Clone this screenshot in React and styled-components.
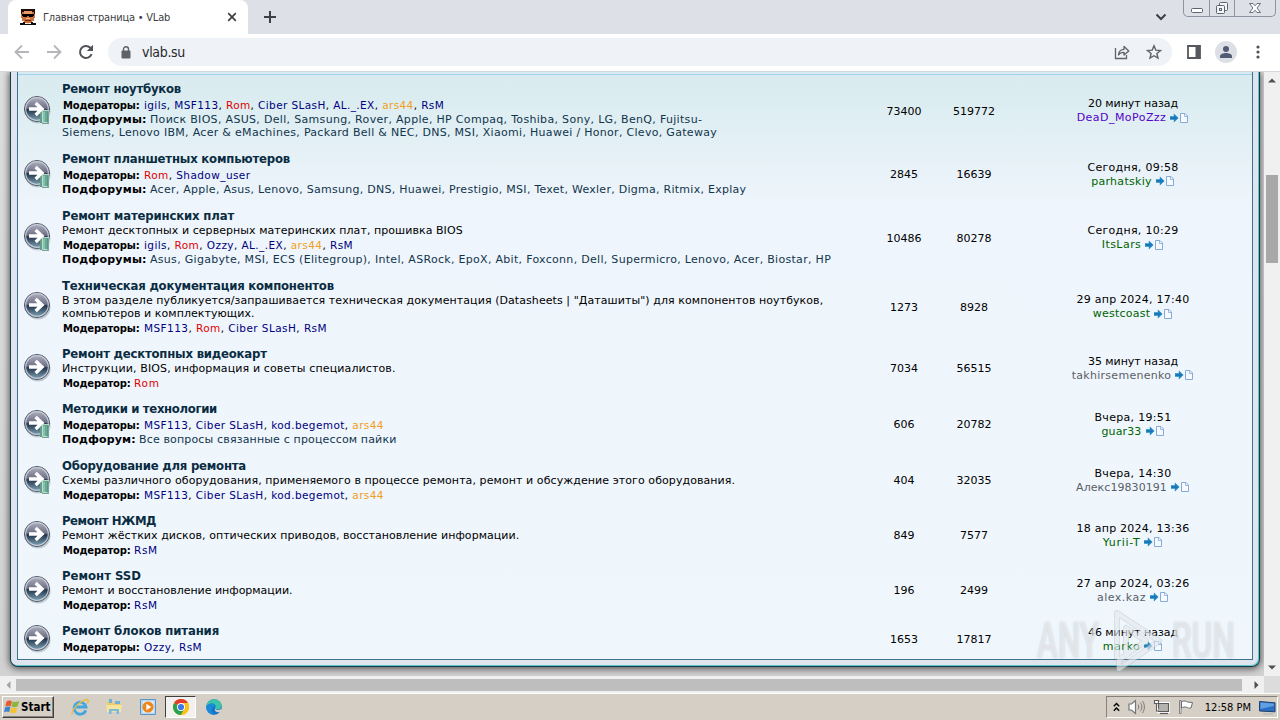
import React from 'react';
import styled, { createGlobalStyle } from 'styled-components';

const NAVY = '#000080';
const RED = '#e00000';
const ORANGE = '#f0a020';
const GREEN = '#006400';
const GREY = '#5a5f66';
const VIOLET = '#5500cc';

const igils = ['igils', NAVY];
const msf = ['MSF113', NAVY];
const rom = ['Rom', RED];
const ciber = ['Ciber SLasH', NAVY];
const alex = ['AL._.EX', NAVY];
const ars = ['ars44', ORANGE];
const rsm = ['RsM', NAVY];
const ozzy = ['Ozzy', NAVY];
const kod = ['kod.begemot', NAVY];
const shadow = ['Shadow_user', NAVY];

// "track" values are letter-spacing in px, tuned for each line
const forums = [
    {
        height: 70, title: 'Ремонт ноутбуков', track: -0.23,
        mods: [igils, msf, rom, ciber, alex, ars, rsm], modTrack: 0.39,
        subs: [
            { text: 'Поиск BIOS, ASUS, Dell, Samsung, Rover, Apple, HP Compaq, Toshiba, Sony, LG, BenQ, Fujitsu-', track: 0.315 },
            { text: 'Siemens, Lenovo IBM, Acer & eMachines, Packard Bell & NEC, DNS, MSI, Xiaomi, Huawei / Honor, Clevo, Gateway', track: 0.3 },
        ],
        topics: '73400', posts: '519772',
        date: '20 минут назад', dateTrack: -0.05, user: 'DeaD_MoPoZzz', userColor: VIOLET, userTrack: 0.45,
    },
    {
        height: 57, title: 'Ремонт планшетных компьютеров', track: -0.206,
        mods: [rom, shadow], modTrack: 0.42,
        subs: [{ text: 'Acer, Apple, Asus, Lenovo, Samsung, DNS, Huawei, Prestigio, MSI, Texet, Wexler, Digma, Ritmix, Explay', track: 0.265 }],
        topics: '2845', posts: '16639',
        date: 'Сегодня, 09:58', dateTrack: 0.28, user: 'parhatskiy', userColor: GREEN, userTrack: 0.3,
    },
    {
        height: 70, title: 'Ремонт материнских плат', track: -0.167,
        desc: [{ text: 'Ремонт десктопных и серверных материнских плат, прошивка BIOS', track: 0.06 }],
        mods: [igils, rom, ozzy, alex, ars, rsm], modTrack: 0.42,
        subs: [{ text: 'Asus, Gigabyte, MSI, ECS (Elitegroup), Intel, ASRock, EpoX, Abit, Foxconn, Dell, Supermicro, Lenovo, Acer, Biostar, HP', track: 0.298 }],
        topics: '10486', posts: '80278',
        date: 'Сегодня, 10:29', dateTrack: 0.28, user: 'ItsLars', userColor: GREEN, userTrack: 0.45,
    },
    {
        height: 68, title: 'Техническая документация компонентов', track: -0.22,
        desc: [
            { text: 'В этом разделе публикуется/запрашивается техническая документация (Datasheets | "Даташиты") для компонентов ноутбуков,', track: 0.072 },
            { text: 'компьютеров и комплектующих.', track: 0.05 },
        ],
        mods: [msf, rom, ciber, rsm], modTrack: 0.43,
        topics: '1273', posts: '8928',
        date: '29 апр 2024, 17:40', dateTrack: 0.24, user: 'westcoast', userColor: GREEN, userTrack: 0.25,
    },
    {
        height: 55, title: 'Ремонт десктопных видеокарт', track: -0.21,
        desc: [{ text: 'Инструкции, BIOS, информация и советы специалистов.', track: 0.12 }],
        mods: [rom], modTrack: 0.8,
        topics: '7034', posts: '56515',
        date: '35 минут назад', dateTrack: -0.05, user: 'takhirsemenenko', userColor: GREY, userTrack: 0.29,
    },
    {
        height: 57, title: 'Методики и технологии', track: -0.333,
        mods: [msf, ciber, kod, ars], modTrack: 0.41,
        subs: [{ text: 'Все вопросы связанные с процессом пайки', track: 0.155 }],
        topics: '606', posts: '20782',
        date: 'Вчера, 19:51', dateTrack: 0.314, user: 'guar33', userColor: GREEN, userTrack: 0.13,
    },
    {
        height: 55, title: 'Оборудование для ремонта', track: -0.227, folder: true,
        desc: [{ text: 'Схемы различного оборудования, применяемого в процессе ремонта, ремонт и обсуждение этого оборудования.', track: 0.08 }],
        mods: [msf, ciber, kod, ars], modTrack: 0.41,
        topics: '404', posts: '32035',
        date: 'Вчера, 14:30', dateTrack: 0.314, user: 'Алекс19830191', userColor: GREY, userTrack: 0.06,
    },
    {
        height: 55, title: 'Ремонт НЖМД', track: -0.473,
        desc: [{ text: 'Ремонт жёстких дисков, оптических приводов, восстановление информации.', track: 0.045 }],
        mods: [rsm], modTrack: 0.6,
        topics: '849', posts: '7577',
        date: '18 апр 2024, 13:36', dateTrack: 0.24, user: 'Yurii-T', userColor: GREEN, userTrack: 0.7,
    },
    {
        height: 55, title: 'Ремонт SSD', track: 0,
        desc: [{ text: 'Ремонт и восстановление информации.', track: -0.02 }],
        mods: [rsm], modTrack: 0.6,
        topics: '196', posts: '2499',
        date: '27 апр 2024, 03:26', dateTrack: 0.24, user: 'alex.kaz', userColor: GREY, userTrack: 0.49,
    },
    {
        height: 43, title: 'Ремонт блоков питания', track: -0.142,
        mods: [ozzy, rsm], modTrack: 0.45,
        topics: '1653', posts: '17817',
        date: '46 минут назад', dateTrack: -0.05, user: 'marko', userColor: GREEN, userTrack: 0.6,
    },
];

const ForumIcon = ({ folder }) => (
    <svg width="28" height="30" viewBox="0 0 28 30">
        <defs>
            <linearGradient id="ball" x1="0" y1="0" x2="0" y2="1">
                <stop offset="0" stopColor="#b3b3c2" />
                <stop offset="0.47" stopColor="#6d7086" />
                <stop offset="0.53" stopColor="#22334a" />
                <stop offset="1" stopColor="#86abbd" />
            </linearGradient>
        </defs>
        <ellipse cx="14" cy="16.5" rx="12.5" ry="12" fill="#8899a5" opacity="0.45" />
        <circle cx="13" cy="14" r="12.5" fill="url(#ball)" stroke="#525866" />
        <circle cx="13" cy="14" r="11.3" fill="none" stroke="#cdd3dd" strokeWidth="1.2" opacity="0.85" />
        <path d="M5 12.2h8.5L10.500 9.200l2.300-2.400L20.500 14l-7.700 7.200-2.300-2.400 3-3H5z" fill="#fff" />
        {folder && (
            <g>
                <path d="M16 18l3-2v12h-3z" fill="#5e9f86" />
                <path d="M18.5 15.5h6.5v12h-6.5z" fill="#69a892" stroke="#d0ece2" strokeWidth="0.8" />
                <path d="M24 16v12M18 28.4h7" stroke="#477b70" strokeWidth="0.8" />
                <path d="M20 17v10" stroke="#a9dacb" />
            </g>
        )}
    </svg>
);

const GotoPost = () => (
    <svg width="20" height="13" viewBox="0 0 20 13">
        <path d="M1 4.200h3.800V1.500L9.500 6 4.800 10.500V7.800H1z" fill="#1f86c4" />
        <path d="M2 6h5.500" stroke="#1766a5" />
        <path d="M11.500 1.500h4.500l2.500 2.500v6.500h-7z" fill="#f6faff" stroke="#86aadb" />
        <path d="M15.500 1.500v3h3" fill="none" stroke="#86aadb" strokeWidth="0.8" />
    </svg>
);

const ForumRow = ({ forum }) => (
    <Row $height={forum.height}>
        <IconCell><ForumIcon folder={forum.subs || forum.folder} /></IconCell>
        <InfoCell>
            <Title $track={forum.track}>{forum.title}</Title>
            {forum.desc && forum.desc.map((d) => <Desc key={d.text} $track={d.track}>{d.text}</Desc>)}
            <Mods $track={forum.modTrack}>
                <ModLabel $single={forum.mods.length === 1}>{forum.mods.length === 1 ? 'Модератор:' : 'Модераторы:'}</ModLabel>
                {forum.mods.map(([name, color], i) => (
                    <React.Fragment key={name}>
                        {i > 0 && ', '}
                        <User $color={color}>{name}</User>
                    </React.Fragment>
                ))}
            </Mods>
            {forum.subs && forum.subs.map((s, i) => (
                <Sub key={s.text} $track={s.track}>
                    {i === 0 && (forum.title === 'Методики и технологии'
                        ? <SubLabel $width={77} $track={0.13}>Подфорум:</SubLabel>
                        : <SubLabel $width={88} $track={0.22}>Подфорумы:</SubLabel>)}
                    {s.text}
                </Sub>
            ))}
        </InfoCell>
        <CountCell>{forum.topics}</CountCell>
        <CountCell>{forum.posts}</CountCell>
        <LastCell>
            <DateLine $track={forum.dateTrack}>{forum.date}</DateLine>
            <UserLine $track={forum.userTrack}>
                <User $color={forum.userColor}>{forum.user}</User>
                <GotoPost />
            </UserLine>
        </LastCell>
    </Row>
);

const Favicon = () => (
    <svg width="16" height="16" viewBox="0 0 16 16" shapeRendering="crispEdges">
        <path d="M1 1h14v8h-1v3h-2v2H4v-2H2V9H1z" fill="#c8703c" />
        <path d="M1 0h14v5h-1V3h-2V2H4v1H2v2H1z" fill="#1d0d0a" />
        <path d="M4 2h8v3H4z" fill="#e79a62" />
        <path d="M2 5h12v2h-1v1H9V7H7v1H3V7H2z" fill="#000" />
        <path d="M6 9h4v1H6z" fill="#f3b684" />
        <path d="M5 11h6v1H5z" fill="#7d1f12" />
        <path d="M0 14h3v-1h2v2h6v-2h2v1h3v2H0z" fill="#100a0a" />
        <path d="M7 14h2v1H7z" fill="#e8d9d0" />
    </svg>
);

const TabBar = () => (
    <TabStrip>
        <Tab>
            <Favicon />
            <TabTitle>Главная страница • VLab</TabTitle>
            <svg width="10" height="10" viewBox="0 0 10 10"><path d="M1.2 1.2l7.6 7.6M8.8 1.2L1.2 8.8" stroke="#3c4043" strokeWidth="1.7" /></svg>
        </Tab>
        <NewTab>
            <svg width="12" height="12" viewBox="0 0 12 12"><path d="M6 0v12M0 6h12" stroke="#3c4043" strokeWidth="2" /></svg>
        </NewTab>
        <TabSearch>
            <svg width="12" height="8" viewBox="0 0 12 8"><path d="M1.5 1.5L6 6l4.500-4.500" fill="none" stroke="#3c4043" strokeWidth="2" /></svg>
        </TabSearch>
        <WindowButtons>
            <WindowButton $width={25}>
                <svg width="14" height="14" viewBox="0 0 14 14"><rect x="1.500" y="7.500" width="11" height="4" rx="1" fill="#fff" stroke="#5d6370" /></svg>
            </WindowButton>
            <WindowButton $width={25}>
                <svg width="14" height="14" viewBox="0 0 14 14" fill="#f4f5f8" stroke="#5d6370">
                    <rect x="4.500" y="1.500" width="8" height="8" rx="1" />
                    <rect x="1.500" y="4.500" width="8" height="8" rx="1" />
                    <rect x="4.500" y="7.500" width="2" height="2" />
                </svg>
            </WindowButton>
            <WindowButton $width={41}>
                <svg width="14" height="14" viewBox="0 0 14 14">
                    <path d="M1.500 2.500h3.500l2 2.300 2-2.300h3.500L9 7l3.500 4.500H9L7 9.200 5 11.500H1.500L5 7z" fill="#fff" stroke="#5d6370" strokeWidth="0.9" />
                </svg>
            </WindowButton>
        </WindowButtons>
    </TabStrip>
);

const Toolbar = () => (
    <ToolbarRow>
        <NavButtons>
            <svg width="16" height="16" viewBox="0 0 16 16" fill="none" stroke="#b4b6ba" strokeWidth="1.800"><path d="M15 8H2M8 1.500L1.500 8 8 14.500" /></svg>
            <svg width="16" height="16" viewBox="0 0 16 16" fill="none" stroke="#b4b6ba" strokeWidth="1.800"><path d="M1 8h13M8 1.500L14.500 8 8 14.500" /></svg>
            <svg width="16" height="16" viewBox="0 0 16 16">
                <path d="M13.600 10.200A6 6 0 1 1 12.300 3.800L14 5.500" fill="none" stroke="#505357" strokeWidth="2" />
                <path d="M15 0.800v6.200H8.800z" fill="#505357" />
            </svg>
        </NavButtons>
        <Omnibox>
            <svg width="10" height="13" viewBox="0 0 10 13">
                <rect x="0.500" y="4.500" width="9" height="8" rx="1" fill="#5f6368" />
                <path d="M2.500 5V3.200a2.500 2.500 0 0 1 5 0V5" fill="none" stroke="#5f6368" strokeWidth="1.400" />
            </svg>
            <Url>vlab.su</Url>
            <svg width="16" height="16" viewBox="0 0 16 16" fill="none" stroke="#5f6368" strokeWidth="1.300">
                <path d="M1.500 4v10.500h11V11" />
                <path d="M4.500 11c.3-3.600 2.300-5.600 5.500-5.700V2.500L14.800 7 10 11V8.300C7.500 8.200 5.800 9 4.500 11z" strokeLinejoin="round" />
            </svg>
            <svg width="16" height="16" viewBox="0 0 16 16">
                <path d="M8 1.800l1.800 4.300 4.700.4-3.600 3 1.100 4.600L8 11.700l-4 2.400 1.100-4.600-3.600-3 4.700-.4z" fill="none" stroke="#5f6368" strokeWidth="1.400" />
            </svg>
        </Omnibox>
        <ToolbarActions>
            <svg width="14" height="14" viewBox="0 0 14 14"><path d="M1 1h12v12H1z" fill="#fff" stroke="#55585d" strokeWidth="1.800" /><path d="M8.500 1H13v12H8.500z" fill="#55585d" /></svg>
            <Avatar>
                <svg width="14" height="14" viewBox="0 0 14 14" fill="#515b73"><circle cx="7" cy="4" r="3" /><path d="M1 13v-1.800C1 9 4.500 8 7 8s6 1 6 3.200V13z" /></svg>
            </Avatar>
            <svg width="4" height="14" viewBox="0 0 4 14" fill="#505357"><circle cx="2" cy="2" r="1.600" /><circle cx="2" cy="7" r="1.600" /><circle cx="2" cy="12" r="1.600" /></svg>
        </ToolbarActions>
    </ToolbarRow>
);

const StartLogo = () => (
    <svg width="16" height="16" viewBox="0 0 16 16">
        <path d="M2.500 2.500C4.500 1 6 1.300 8 2.200L6.700 7.300C5 6.500 3.300 6.400 1.300 7.600z" fill="#e8592b" />
        <path d="M8.700 2.500c2 .9 4 .9 6.500-.5l-1.500 5.200c-2 1.300-4.200 1.100-6.300.3z" fill="#86b83c" />
        <path d="M1.100 8.400c2-1.200 3.700-1.100 5.400-.3L5.200 13c-2-.9-3.500-.8-5.200.3z" fill="#3c83cf" />
        <path d="M7.200 8.400c2 .9 4.200.9 6.300-.2L12 13.300c-2 1.200-4 1.200-6.100.2z" fill="#f7c431" />
    </svg>
);

const IeIcon = () => (
    <svg width="18" height="18" viewBox="0 0 18 18" fill="none">
        <path d="M14.800 12.200A6 6 0 1 1 15 9H5" stroke="#46a6e0" strokeWidth="2.800" />
        <path d="M1.500 16.500C-.5 13 9 2 16.500 1.500c1.500 1 .5 3-.5 4" stroke="#e9bd45" strokeWidth="1.400" />
    </svg>
);

const FolderIcon = () => (
    <svg width="18" height="18" viewBox="0 0 18 18">
        <path d="M2 3h5l1 2h8v9H2z" fill="#eccb6a" />
        <path d="M4 1h3v4H4zM10 3h5v3h-5z" fill="#6fb2d8" />
        <path d="M1 7h16l-1 7H2z" fill="#f6e39c" />
        <path d="M4 16v-5h10v5h-2.500v-3h-5v3z" fill="#7bb9dd" />
    </svg>
);

const PlayerIcon = () => (
    <svg width="18" height="18" viewBox="0 0 18 18">
        <path d="M1.500 1.500h15v15h-15z" fill="#b9d9f2" stroke="#5e93c4" />
        <path d="M4 3.500h10.500v11H4z" fill="#e8f3fb" />
        <circle cx="9" cy="9" r="5.600" fill="#f08519" />
        <path d="M7.300 5.700v6.600L12.300 9z" fill="#fff" />
    </svg>
);

const ChromeIcon = () => (
    <svg width="16" height="16" viewBox="0 0 16 16">
        <circle cx="8" cy="8" r="8" fill="#fbc116" />
        <path d="M8 8L1.070 4A8 8 0 0 1 14.930 4z" fill="#e33b2e" />
        <path d="M8 8L1.070 4A8 8 0 0 0 8 16l3.500-6z" fill="#2da14c" />
        <path d="M8 4h6.930A8 8 0 0 1 8 16l3.500-6z" fill="#fbc116" />
        <circle cx="8" cy="8" r="4" fill="#fff" />
        <circle cx="8" cy="8" r="3.100" fill="#3b78e7" />
    </svg>
);

const EdgeIcon = () => (
    <svg width="16" height="16" viewBox="0 0 16 16">
        <circle cx="8" cy="8" r="7.800" fill="#1673c8" />
        <path d="M.3 7.500C1 3 4.200.2 8.200.2c4.500 0 7.500 3.300 7.500 6.300 0 2.500-2 4-4.300 4-1.600 0-2.400-.6-2.400-1.200 0-.5.6-.7.6-1.800C9.600 5.800 8 4.500 6 4.500 3.400 4.500 1.300 6 .3 7.500z" fill="#3cc3a8" />
        <path d="M.3 7.500C1.500 5.800 3.500 4.500 6 4.500c2 0 3.600 1.300 3.600 3C7.800 6.700 5.500 8.500 5.600 11c.1 2.300 1.700 4.200 3.900 4.700C4.500 16.500-.3 12.500.3 7.500z" fill="#1a8bd8" />
        <path d="M9 9.300c0 .8 1 1.700 2.600 1.700 1.400 0 2.500-.4 3.400-1L16 12l-2 2.500-1-1.500c-3 .8-4.800-1.200-4-3.700z" fill="#d4cfc6" />
    </svg>
);

const Taskbar = () => (
    <TaskbarRow>
        <StartButton><StartLogo />Start</StartButton>
        <QuickLaunch>
            <IeIcon />
            <FolderIcon />
            <PlayerIcon />
        </QuickLaunch>
        <ActiveTask><ChromeIcon /></ActiveTask>
        <EdgeIcon />
        <Tray>
            <svg width="7" height="10" viewBox="0 0 7 10"><path d="M.8 4.200l2.700-2.700 2.700 2.700M.8 8.700l2.700-2.700 2.700 2.700" fill="none" stroke="#000" strokeWidth="1.400" /></svg>
            <svg width="17" height="16" viewBox="0 0 17 16" fill="none" stroke="#77777a" strokeWidth="1.200">
                <path d="M1 5h2.500l4-3.500v13L3.500 11H1z" fill="#fff" />
                <path d="M10 5.500c1 1.500 1 3.500 0 5M12.300 3.700c2 2.500 2 6 0 8.600M14.500 2c2.500 3.500 2.500 8.500 0 12" strokeWidth="1" />
            </svg>
            <svg width="17" height="16" viewBox="0 0 17 16" fill="#fff" stroke="#5c5c5e">
                <path d="M5.500 4.500h10v8h-10z" fill="#c9c7c2" stroke="#fff" strokeWidth="3" />
                <path d="M5.500 4.500h10v8h-10z" fill="#b5b3ae" strokeWidth="1.200" />
                <path d="M7 14.500h8" strokeWidth="1.200" />
                <path d="M1.500 1.500h4v3h-4zM3.500 4.500V12H6" strokeWidth="1.100" />
            </svg>
            <svg width="17" height="16" viewBox="0 0 17 16" fill="#fff" stroke="#6b6b6d">
                <path d="M3.500 2.500c3-1 4.500-.5 6 .5l5 .5-1.500 5.500c-2 .5-3.200-.3-4.500-.8-2-.4-3.500-.2-5 .8z" />
                <path d="M1.500 1.500h1.500v13H1.500z" strokeWidth="0.800" />
            </svg>
            <Clock>12:58 PM</Clock>
            <svg width="17" height="15" viewBox="0 0 17 15">
                <path d="M.5 1.500L16 2.800v9L.5 11z" fill="#2a6fc4" stroke="#27406a" />
                <path d="M1.500 2.600L15 3.700v2L1.500 9z" fill="#5da0e6" />
                <path d="M4 14h10" stroke="#a9b0b8" />
            </svg>
        </Tray>
    </TaskbarRow>
);

export default function App() {
    return (
        <Screen>
            <GlobalStyle />
            <TabBar />
            <Toolbar />
            <Viewport>
                <Page>
                    <Panel>
                        <ForumList>
                            {forums.map((forum) => <ForumRow key={forum.title} forum={forum} />)}
                        </ForumList>
                    </Panel>
                </Page>
                <VScroll>
                    <svg width="8" height="5" viewBox="0 0 8 5"><path d="M0 4.500L4 .5l4 4z" fill="#505050" /></svg>
                    <VThumb />
                    <svg width="8" height="5" viewBox="0 0 8 5"><path d="M0 .5h8l-4 4z" fill="#505050" /></svg>
                </VScroll>
            </Viewport>
            <HScroll>
                <svg width="5" height="8" viewBox="0 0 5 8"><path d="M4.500 0v8l-4-4z" fill="#a3a3a3" /></svg>
                <HThumb />
                <svg width="5" height="8" viewBox="0 0 5 8"><path d="M.5 0v8l4-4z" fill="#505050" /></svg>
                <Corner />
            </HScroll>
            <Taskbar />
            <Watermark>
                <WatermarkWord>ANY</WatermarkWord>
                <svg width="64" height="64" viewBox="0 0 64 64" fill="none" strokeLinejoin="round">
                    <path d="M13 50V4l42 28-40 28v-9l27-19-20-13v29" stroke="#aab2bd" strokeOpacity="0.35" strokeWidth="6" />
                    <path d="M13 50V4l42 28-40 28v-9l27-19-20-13v29" stroke="#fff" strokeOpacity="0.45" strokeWidth="4" />
                </svg>
                <WatermarkWord>RUN</WatermarkWord>
            </Watermark>
        </Screen>
    );
}

const GlobalStyle = createGlobalStyle`
  body {
    margin: 0;
    overflow: hidden;
  }

  svg {
    display: block;
    flex: none;
  }
`;

const Screen = styled.div`
  position: relative;
  width: 1280px;
  height: 720px;
  display: flex;
  flex-direction: column;
  overflow: hidden;
  background: #fff;
  font-family: "DejaVu Sans", Verdana, sans-serif;
  font-size: 11px;
  color: #000;
`;

/* browser chrome */

const TabStrip = styled.div`
  height: 34px;
  flex: none;
  display: flex;
  align-items: center;
  background: #dde0e7;
`;

const Tab = styled.div`
  box-sizing: border-box;
  width: 240px;
  height: 34px;
  margin-left: 8px;
  padding: 0 11px 0 12px;
  display: flex;
  align-items: center;
  background: #fff;
  border-radius: 8px 8px 0 0;
`;

const TabTitle = styled.div`
  flex: 1;
  margin-left: 7px;
  font-family: "DejaVu Sans Condensed", "DejaVu Sans", sans-serif;
  font-size: 11px;
  letter-spacing: -0.21px;
  white-space: nowrap;
  color: #3c4043;
`;

const NewTab = styled.div`
  margin-left: 16px;
`;

const TabSearch = styled.div`
  margin-left: auto;
  margin-right: 16px;
`;

const WindowButtons = styled.div`
  align-self: flex-start;
  box-sizing: border-box;
  height: 17px;
  margin-right: 4px;
  display: flex;
  border: 1px solid #8d93a0;
  border-top: 0;
  border-radius: 0 0 5px 5px;
`;

const WindowButton = styled.div`
  box-sizing: border-box;
  width: ${(p) => p.$width}px;
  display: flex;
  align-items: center;
  justify-content: center;

  & + & {
    border-left: 1px solid #8d93a0;
  }
`;

const ToolbarRow = styled.div`
  box-sizing: border-box;
  height: 38px;
  flex: none;
  display: flex;
  align-items: center;
  padding-bottom: 1px;
  background: #fff;
  border-bottom: 1px solid #d5d8dc;
`;

const NavButtons = styled.div`
  width: 108px;
  padding-left: 14px;
  box-sizing: border-box;
  display: flex;
  gap: 16px;
`;

const Omnibox = styled.div`
  box-sizing: border-box;
  width: 1064px;
  height: 28px;
  padding: 0 10px 0 13px;
  display: flex;
  align-items: center;
  gap: 16px;
  border-radius: 14px;
  background: #eff2f6;
`;

const Url = styled.div`
  flex: 1;
  margin-left: -5px;
  font-family: "DejaVu Sans Condensed", "DejaVu Sans", sans-serif;
  font-size: 14px;
  letter-spacing: -0.32px;
  color: #26282c;
`;

const ToolbarActions = styled.div`
  flex: 1;
  padding-left: 15px;
  display: flex;
  align-items: center;
`;

const Avatar = styled.div`
  width: 22px;
  height: 22px;
  margin: 0 19px 0 14px;
  display: flex;
  align-items: center;
  justify-content: center;
  border-radius: 50%;
  background: #dcdfe5;
`;

/* page area */

const Viewport = styled.div`
  height: 604px;
  flex: none;
  display: flex;
`;

const Page = styled.div`
  box-sizing: border-box;
  width: 1264px;
  padding: 0 4px 9px 10px;
  display: flex;
  overflow: hidden;
  background: linear-gradient(#dedede, #d2d2d2);
`;

const Panel = styled.div`
  box-sizing: border-box;
  flex: 1;
  display: flex;
  padding: 0 6px 6px;
  border: 1px solid #153c49;
  border-top: 0;
  border-radius: 0 0 8px 8px;
  background: #dfe5ee;
  box-shadow: 0 1px 7px 1px rgba(0, 0, 0, 0.6), inset -1px -1px 0 #5cc4cb;
`;

const ForumList = styled.div`
  box-sizing: border-box;
  flex: 1;
  padding-top: 3px;
  border: 1px solid #3f728c;
  border-top: 0;
  background:
    linear-gradient(#9fd2ec, #9fd2ec) 0 2px / 100% 1px no-repeat,
    linear-gradient(#d9ebf0 0, #dcedf1 30px, #eff5fc 135px, #eff6fc 100%);
`;

const Row = styled.div`
  height: ${(p) => p.$height}px;
  display: grid;
  grid-template-columns: 44px 807px 70px 70px 243px;
  align-items: center;

  &:first-child {
    margin-top: 1px;
  }
`;

const IconCell = styled.div`
  padding: 0 0 2px 6px;
`;

const InfoCell = styled.div`
  align-self: start;
  padding-top: 4px;
  white-space: pre;
`;

const Title = styled.div`
  height: 17px;
  line-height: 17px;
  font-family: "DejaVu Sans Condensed", "DejaVu Sans", sans-serif;
  font-size: 13px;
  font-weight: bold;
  letter-spacing: ${(p) => p.$track}px;
  color: #0a2c42;
`;

const Desc = styled.div`
  height: 13px;
  line-height: 13px;
  letter-spacing: ${(p) => p.$track}px;
`;

const Mods = styled.div`
  height: 15px;
  margin-top: 1px;
  padding-left: 1px;
  line-height: 15px;
  font-size: 10.5px;
  letter-spacing: ${(p) => p.$track}px;
`;

const ModLabel = styled.strong`
  display: inline-block;
  width: ${(p) => (p.$single ? 71 : 81)}px;
  font-size: 10px;
  letter-spacing: -0.18px;
`;

const User = styled.span`
  color: ${(p) => p.$color};
`;

const Sub = styled.div`
  height: 13px;
  line-height: 13px;
  letter-spacing: ${(p) => p.$track}px;
  color: #12354c;
`;

const SubLabel = styled.strong`
  display: inline-block;
  width: ${(p) => p.$width}px;
  letter-spacing: ${(p) => p.$track}px;
  color: #000;
`;

const CountCell = styled.div`
  text-align: center;
`;

const LastCell = styled.div`
  padding-left: 5px;
  display: flex;
  flex-direction: column;
  align-items: center;
`;

const DateLine = styled.div`
  line-height: 14px;
  letter-spacing: ${(p) => p.$track}px;
`;

const UserLine = styled.div`
  display: flex;
  align-items: center;
  gap: 3px;
  line-height: 14px;
  letter-spacing: ${(p) => p.$track}px;
`;

const VScroll = styled.div`
  box-sizing: border-box;
  width: 16px;
  padding: 6px 0;
  display: flex;
  flex-direction: column;
  align-items: center;
  background: #f0f0f0;
`;

const VThumb = styled.div`
  width: 12px;
  height: 88px;
  margin: 92px 0 auto;
  background: #a8a8a8;
`;

const HScroll = styled.div`
  height: 17px;
  flex: none;
  display: flex;
  align-items: center;
  padding-left: 6px;
  background: #f0f0f0;
`;

const HThumb = styled.div`
  width: 1226px;
  height: 12px;
  margin: 0 12px 0 5px;
  background: #bebebe;
`;

const Corner = styled.div`
  align-self: stretch;
  margin-left: auto;
  width: 16px;
  background: #dcdcdc;
`;

/* taskbar */

const TaskbarRow = styled.div`
  box-sizing: border-box;
  flex: 1;
  display: flex;
  align-items: center;
  padding: 0 2px;
  border-top: 1px solid #fff;
  background: #d5cfc6;
`;

const StartButton = styled.div`
  box-sizing: border-box;
  width: 52px;
  height: 22px;
  padding-left: 1px;
  display: flex;
  align-items: center;
  gap: 1px;
  border: 1px solid;
  border-color: #fff #404040 #404040 #fff;
  box-shadow: inset -1px -1px 0 #86827b;
  font-family: "DejaVu Sans Condensed", "DejaVu Sans", sans-serif;
  font-size: 11.5px;
  font-weight: bold;
`;

const QuickLaunch = styled.div`
  display: flex;
  gap: 16px;
  margin-left: 17px;
`;

const ActiveTask = styled.div`
  box-sizing: border-box;
  width: 31px;
  height: 22px;
  margin: 0 10px 0 8px;
  display: flex;
  align-items: center;
  justify-content: center;
  border: 1px solid;
  border-color: #404040 #fff #fff #404040;
  background: #f3f1ee;
`;

const Tray = styled.div`
  box-sizing: border-box;
  width: 172px;
  height: 22px;
  margin-left: auto;
  padding: 0 1px 0 6px;
  display: flex;
  align-items: center;
  gap: 8px;
  border: 1px solid;
  border-color: #86827b #fff #fff #86827b;
`;

const Clock = styled.div`
  margin-left: auto;
  font-family: "DejaVu Sans Condensed", "DejaVu Sans", sans-serif;
  font-size: 11px;
  white-space: nowrap;
`;

/* semi-transparent mark laid over the page's corner */
const Watermark = styled.div`
  position: absolute;
  right: 45px;
  bottom: 47px;
  display: flex;
  align-items: center;
  gap: 4px;
  pointer-events: none;
`;

const WatermarkWord = styled.div`
  width: 63px;
  font: 500 50px/50px Roboto, sans-serif;
  color: rgba(255, 255, 255, 0.55);
  text-shadow: 0 0 2px rgba(150, 160, 172, 0.55);
  transform: scaleX(0.63);
  transform-origin: left;
`;
